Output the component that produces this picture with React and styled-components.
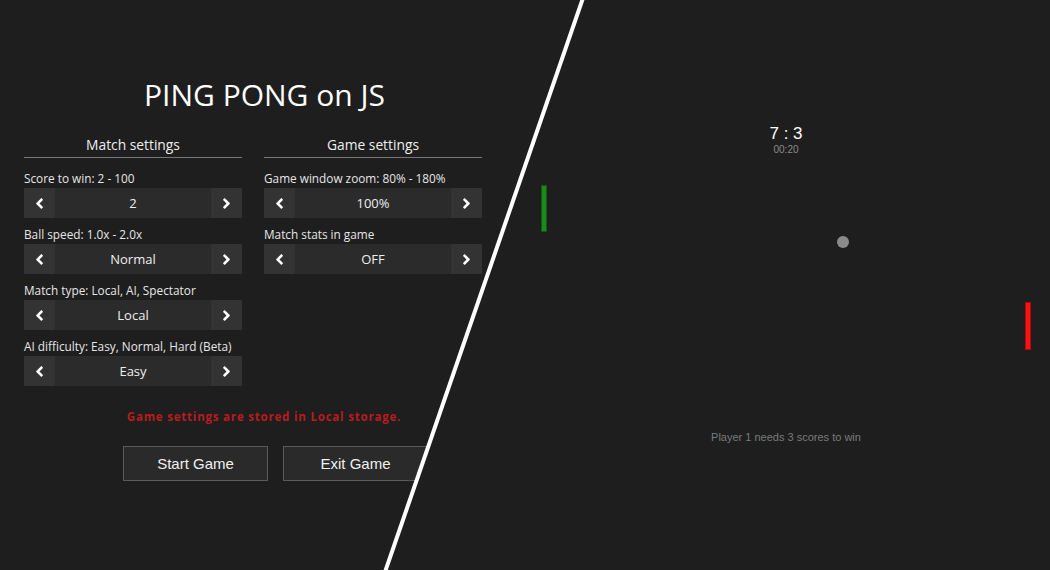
import React from "react";
import styled, { createGlobalStyle } from "styled-components";
import { FaAngleLeft, FaAngleRight } from "react-icons/fa";

const GlobalStyle = createGlobalStyle`
  html, body {
    margin: 0;
    padding: 0;
    background: #1e1e1e;
  }
  * {
    box-sizing: border-box;
  }
`;

const Page = styled.div`
  position: relative;
  display: flex;
  width: 1050px;
  height: 570px;
  overflow: hidden;
  background: #1e1e1e;
`;

const SettingsPanel = styled.div`
  width: 522px;
  flex-shrink: 0;
  padding-top: 75px;
  font-family: "Open Sans", "Liberation Sans", sans-serif;
  color: #eee;
  clip-path: polygon(0 0, 583px 0, 385px 570px, 0 570px);
`;

const Title = styled.h1`
  margin: 0 0 20px;
  padding-left: 7px;
  text-align: center;
  font-size: 30px;
  font-weight: 400;
  line-height: 40px;
  color: #fff;
`;

const Columns = styled.div`
  display: flex;
  gap: 22px;
  padding-left: 24px;
`;

const Column = styled.div`
  width: 218px;
  display: flex;
  flex-direction: column;
`;

const SectionTitle = styled.div`
  font-size: 13.8px;
  line-height: 20px;
  text-align: center;
  padding-bottom: 2px;
  border-bottom: 1px solid #777;
  margin-bottom: 11px;
`;

const Label = styled.div`
  font-size: 11.8px;
  line-height: 18px;
  color: #e6e6e6;
  margin-bottom: 1px;
  white-space: nowrap;
`;

const Stepper = styled.div`
  display: flex;
  height: 30px;
  margin-bottom: 7px;
  background: #2b2b2b;
`;

const ArrowButton = styled.button`
  width: 31px;
  border: none;
  padding: 0;
  background: #333;
  color: #fff;
  display: flex;
  align-items: center;
  justify-content: center;
  font-size: 17px;
  cursor: pointer;
`;

const StepperValue = styled.div`
  flex: 1;
  display: flex;
  align-items: center;
  justify-content: center;
  font-size: 13px;
  color: #eee;
`;

const Note = styled.div`
  margin-top: 16px;
  text-align: center;
  padding-left: 6px;
  font-size: 11.5px;
  line-height: 16px;
  font-weight: 700;
  letter-spacing: 0.8px;
  color: #b81c1c;
`;

const ButtonRow = styled.div`
  display: flex;
  justify-content: center;
  gap: 15px;
  margin-top: 21px;
  padding-left: 29px;
`;

const MenuButton = styled.button`
  width: 145px;
  height: 35px;
  background: #2a2a2a;
  border: 1px solid #5a5a5a;
  color: #f0f0f0;
  font-family: "Liberation Sans", Arial, sans-serif;
  font-size: 15px;
  cursor: pointer;
`;

const GameArea = styled.div`
  position: relative;
  flex: 1;
  display: flex;
  flex-direction: column;
  align-items: center;
  padding-top: 125px;
  font-family: "Liberation Sans", Arial, sans-serif;
`;

const Score = styled.div`
  font-size: 17px;
  line-height: 18px;
  color: #fff;
`;

const Timer = styled.div`
  font-size: 10px;
  line-height: 14px;
  color: #8a8a8a;
`;

const WinMessage = styled.div`
  margin-top: 273px;
  font-size: 11px;
  line-height: 14px;
  color: #7a7a7a;
`;

const Paddle = styled.div`
  position: absolute;
  width: 6px;
  height: ${(p) => p.$height}px;
  top: ${(p) => p.$top}px;
  left: ${(p) => p.$left}px;
  background: ${(p) => p.$color};
  border: 1px solid ${(p) => p.$border};
`;

const Ball = styled.div`
  position: absolute;
  left: 315px;
  top: 236px;
  width: 12px;
  height: 12px;
  border-radius: 50%;
  background: #8a8a8a;
`;

const Divider = styled.svg`
  position: absolute;
  inset: 0;
  pointer-events: none;
`;

const matchSettings = [
  { label: "Score to win: 2 - 100", value: "2" },
  { label: "Ball speed: 1.0x - 2.0x", value: "Normal" },
  { label: "Match type: Local, AI, Spectator", value: "Local" },
  { label: "AI difficulty: Easy, Normal, Hard (Beta)", value: "Easy" },
];

const gameSettings = [
  { label: "Game window zoom: 80% - 180%", value: "100%" },
  { label: "Match stats in game", value: "OFF" },
];

function Setting({ label, value }) {
  return (
    <>
      <Label>{label}</Label>
      <Stepper>
        <ArrowButton aria-label="previous">
          <FaAngleLeft />
        </ArrowButton>
        <StepperValue>{value}</StepperValue>
        <ArrowButton aria-label="next">
          <FaAngleRight />
        </ArrowButton>
      </Stepper>
    </>
  );
}

export default function App() {
  return (
    <>
      <GlobalStyle />
      <Page>
        <SettingsPanel>
          <Title>PING PONG on JS</Title>
          <Columns>
            <Column>
              <SectionTitle>Match settings</SectionTitle>
              {matchSettings.map((s) => (
                <Setting key={s.label} {...s} />
              ))}
            </Column>
            <Column>
              <SectionTitle>Game settings</SectionTitle>
              {gameSettings.map((s) => (
                <Setting key={s.label} {...s} />
              ))}
            </Column>
          </Columns>
          <Note>Game settings are stored in Local storage.</Note>
          <ButtonRow>
            <MenuButton>Start Game</MenuButton>
            <MenuButton>Exit Game</MenuButton>
          </ButtonRow>
        </SettingsPanel>
        <GameArea>
          <Score>7 : 3</Score>
          <Timer>00:20</Timer>
          <WinMessage>Player 1 needs 3 scores to win</WinMessage>
          <Paddle $left={19} $top={185} $height={47} $color="#1a8a1a" $border="#0f5c0f" />
          <Paddle $left={503} $top={302} $height={48} $color="#ff1010" $border="#a80c0c" />
          <Ball />
        </GameArea>
        <Divider width="1050" height="570" viewBox="0 0 1050 570">
          <line x1="583" y1="-2" x2="385" y2="572" stroke="#fff" strokeWidth="4" />
        </Divider>
      </Page>
    </>
  );
}
